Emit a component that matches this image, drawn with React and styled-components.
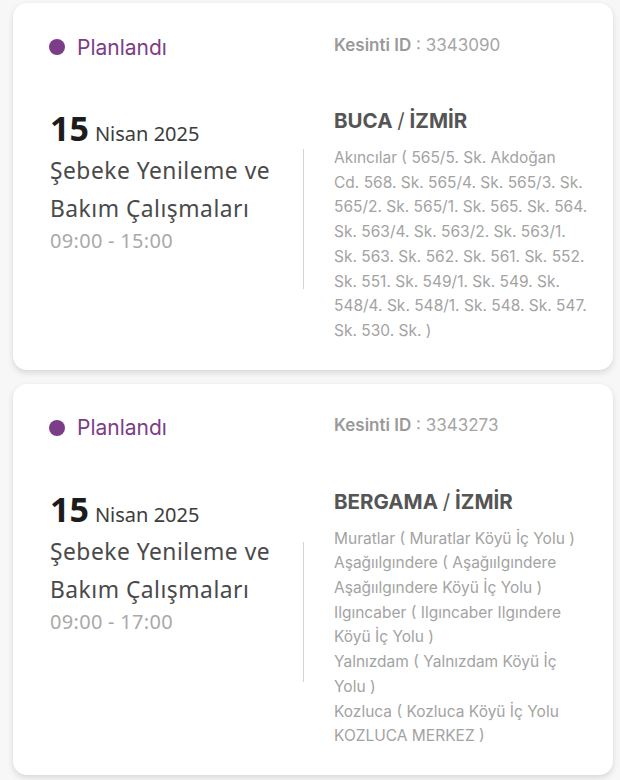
import React from "react";
import styled, { createGlobalStyle } from "styled-components";

const Global = createGlobalStyle`
  html, body { margin: 0; padding: 0; background: #f7f7f7; }
  * { box-sizing: border-box; }
`;

const Page = styled.div`
  padding: 3px 7px 8px 13px;
  display: flex;
  flex-direction: column;
  gap: 14px;
`;

const Card = styled.div`
  width: 600px;
  background: #ffffff;
  border-radius: 14px;
  box-shadow: 0 3px 6px rgba(0, 0, 0, 0.12), 0 0 2px rgba(0, 0, 0, 0.04);
  padding: 29px 24px 26px 37px;
  display: flex;
  flex-direction: column;
`;

const Header = styled.div`
  display: flex;
  align-items: center;
  height: 28px;
`;

const Status = styled.div`
  width: 284px;
  display: flex;
  align-items: center;
  gap: 12px;
  font-family: "Inter", "Noto Sans", sans-serif;
  font-size: 21px;
  color: #7b3d88;
  margin-top: 2px;
`;

const Dot = styled.span`
  width: 16px;
  height: 16px;
  margin-left: -1px;
  border-radius: 50%;
  background: #7b3d88;
  flex: none;
`;

const OutageId = styled.div`
  font-family: "Inter", "Noto Sans", sans-serif;
  font-size: 17px;
  color: #a6a6a6;
  margin-top: -3px;
  b { font-weight: 600; color: #9a9a9a; }
`;

const Body = styled.div`
  display: flex;
  margin-top: 48px;
`;

const Left = styled.div`
  width: 253px;
  padding-top: 2px;
  flex: none;
`;

const DateLine = styled.div`
  font-family: "Noto Sans", sans-serif;
  color: #3c3c3c;
  font-size: 20px;
  line-height: 37px;
  strong {
    font-size: 34px;
    font-weight: 700;
    color: #1c1c1c;
    margin-right: 6px;
  }
`;

const Title = styled.div`
  font-family: "Noto Sans", sans-serif;
  font-size: 22.8px;
  letter-spacing: 0.5px;
  line-height: 38px;
  color: #4a4a4a;
`;

const Time = styled.div`
  font-family: "Noto Sans", sans-serif;
  font-size: 20px;
  letter-spacing: 0.3px;
  line-height: 26px;
  color: #a9a9a9;
`;

const Divider = styled.div`
  width: 1px;
  height: 140px;
  background: #d4d4d4;
  align-self: center;
  margin-bottom: 14px;
  margin-right: 30px;
  flex: none;
`;

const Right = styled.div`
  flex: 1;
  min-width: 0;
`;

const Location = styled.div`
  font-family: "Inter", "Noto Sans", sans-serif;
  font-size: 20.5px;
  font-weight: 700;
  color: #555555;
  line-height: 26px;
  margin-bottom: 12px;
  span { font-weight: 400; }
`;

const Streets = styled.div`
  font-family: "Inter", "Noto Sans", sans-serif;
  font-size: 15.5px;
  line-height: 24.7px;
  color: #a3a3a3;
  white-space: pre-line;
`;

const outages = [
  {
    id: "3343090",
    time: "09:00 - 15:00",
    district: "BUCA",
    streets: [
      "Akıncılar ( 565/5. Sk. Akdoğan\nCd. 568. Sk. 565/4. Sk. 565/3. Sk.\n565/2. Sk. 565/1. Sk. 565. Sk. 564.\nSk. 563/4. Sk. 563/2. Sk. 563/1.\nSk. 563. Sk. 562. Sk. 561. Sk. 552.\nSk. 551. Sk. 549/1. Sk. 549. Sk.\n548/4. Sk. 548/1. Sk. 548. Sk. 547.\nSk. 530. Sk. )",
    ],
  },
  {
    id: "3343273",
    time: "09:00 - 17:00",
    district: "BERGAMA",
    streets: [
      "Muratlar ( Muratlar Köyü İç Yolu )",
      "Aşağıılgındere ( Aşağıılgındere Aşağıılgındere Köyü İç Yolu )",
      "Ilgıncaber ( Ilgıncaber Ilgındere Köyü İç Yolu )",
      "Yalnızdam ( Yalnızdam Köyü İç Yolu )",
      "Kozluca ( Kozluca Köyü İç Yolu KOZLUCA MERKEZ )",
    ],
  },
];

function OutageCard({ o }) {
  return (
    <Card>
      <Header>
        <Status>
          <Dot />
          Planlandı
        </Status>
        <OutageId>
          <b>Kesinti ID</b> : {o.id}
        </OutageId>
      </Header>
      <Body>
        <Left>
          <DateLine>
            <strong>15</strong>Nisan 2025
          </DateLine>
          <Title>Şebeke Yenileme ve Bakım Çalışmaları</Title>
          <Time>{o.time}</Time>
        </Left>
        <Divider />
        <Right>
          <Location>
            {o.district} <span>/</span> İZMİR
          </Location>
          <Streets>
            {o.streets.map((s, i) => (
              <div key={i}>{s}</div>
            ))}
          </Streets>
        </Right>
      </Body>
    </Card>
  );
}

export default function App() {
  return (
    <>
      <Global />
      <Page>
        {outages.map((o) => (
          <OutageCard key={o.id} o={o} />
        ))}
      </Page>
    </>
  );
}
